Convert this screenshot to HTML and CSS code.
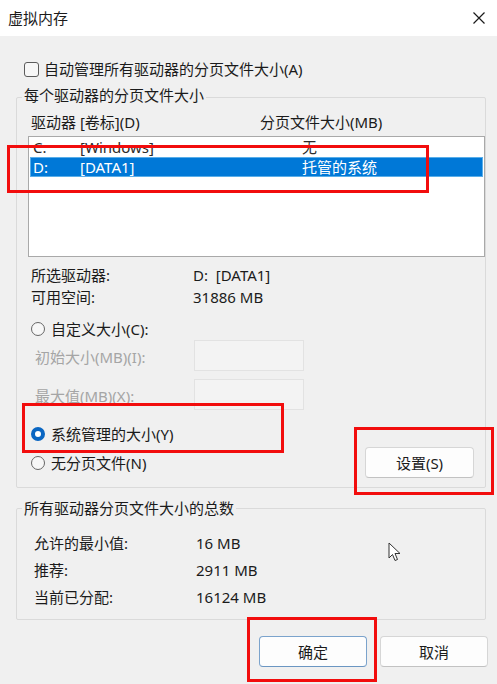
FILE: index.html
```html
<!DOCTYPE html>
<html lang="zh-CN">
<head>
<meta charset="utf-8">
<title>虚拟内存</title>
<link rel="stylesheet" href="styles.css">
</head>
<body>
<div class="window">
  <div class="titlebar">
    <span class="title">虚拟内存</span>
    <svg class="close" width="14" height="14" viewBox="0 0 14 14"><path d="M1.5 1.5 L12.5 12.5 M12.5 1.5 L1.5 12.5" stroke="#1b1b1b" stroke-width="1.2" fill="none"/></svg>
  </div>
  <div class="content">
    <div class="check-row"><span class="checkbox"></span><span>自动管理所有驱动器的分页文件大小(A)</span></div>

    <div class="group group-drives">
      <div class="group-title">每个驱动器的分页文件大小</div>
      <div class="col-head"><span class="h1">驱动器 [卷标](D)</span><span>分页文件大小(MB)</span></div>
      <div class="listbox">
        <div class="lrow"><span class="l1">C:</span><span class="l2">[Windows]</span><span>无</span></div>
        <div class="lrow sel"><span class="l1">D:</span><span class="l2">[DATA1]</span><span>托管的系统</span></div>
      </div>
      <div class="info">
        <div class="irow"><span class="ik">所选驱动器:</span><span>D:&nbsp; [DATA1]</span></div>
        <div class="irow"><span class="ik">可用空间:</span><span>31886 MB</span></div>
      </div>
      <div class="radio-row r-custom"><span class="radio"></span><span>自定义大小(C):</span></div>
      <div class="field-row f-first"><span class="fl">初始大小(MB)(I):</span><span class="input"></span></div>
      <div class="field-row f-second"><span class="fl">最大值(MB)(X):</span><span class="input"></span></div>
      <div class="radio-row r-system"><span class="radio on"></span><span>系统管理的大小(Y)</span></div>
      <div class="last-row">
        <div class="radio-row"><span class="radio"></span><span>无分页文件(N)</span></div>
        <button class="btn btn-set">设置(S)</button>
      </div>
    </div>

    <div class="group group-total">
      <div class="group-title">所有驱动器分页文件大小的总数</div>
      <div class="trows">
        <div class="trow"><span class="tk">允许的最小值:</span><span>16 MB</span></div>
        <div class="trow"><span class="tk">推荐:</span><span>2911 MB</span></div>
        <div class="trow"><span class="tk">当前已分配:</span><span>16124 MB</span></div>
      </div>
    </div>

    <div class="actions">
      <button class="btn btn-default">确定</button>
      <button class="btn">取消</button>
    </div>
  </div>

  <div class="mark mark-list"></div>
  <div class="mark mark-radio"></div>
  <div class="mark mark-set"></div>
  <div class="mark mark-ok"></div>

  <svg class="cursor" width="14" height="21" viewBox="0 0 14 21"><path d="M1 1 L1 16 L4.5 12.5 L7 18.5 L9.5 17.5 L7 11.5 L12 11.5 Z" fill="#ffffff" stroke="#333" stroke-width="1" stroke-linejoin="round"/></svg>
</div>
</body>
</html>
```

FILE: styles.css
```css
* { box-sizing: border-box; }
html, body { margin: 0; padding: 0; }
body {
  background: #f0f0f0;
  font-family: "Noto Sans", "Noto Sans CJK SC", sans-serif;
  font-size: 15px;
  color: #1b1b1b;
}
.window {
  position: relative;
  width: 497px;
  height: 684px;
  background: #f0f0f0;
  overflow: hidden;
}
.titlebar {
  height: 36px;
  background: #ffffff;
  display: flex;
  align-items: center;
  justify-content: space-between;
  padding: 0 11px 0 8px;
}
.title { font-size: 15px; line-height: 20px; }
.close { display: block; }

.content { padding: 0 11px 0 16px; }

.check-row {
  margin-top: 23px;
  height: 20px;
  display: flex;
  align-items: center;
  padding-left: 8px;
  line-height: 20px;
}
.checkbox {
  width: 15px;
  height: 15px;
  border: 1px solid #5c5c5c;
  border-radius: 3px;
  background: #f7f7f7;
  margin-right: 5px;
  flex: none;
}

.group {
  border: 1px solid #dadada;
  border-radius: 2px;
}
.group-title {
  display: table;
  line-height: 20px;
  padding: 0 2px;
  margin-left: 5px;
  background: #f0f0f0;
}
.group-drives { margin-top: 18px; padding-bottom: 9px; }
.group-drives .group-title { margin-top: -13px; }

.col-head {
  margin-top: 7px;
  line-height: 20px;
  padding-left: 14px;
  display: flex;
}
.h1 { width: 229px; }

.listbox {
  margin: 4px 0 0 11px;
  height: 121px;
  border: 1px solid #a9a9a9;
  background: #ffffff;
  padding: 0 1px;
}
.lrow {
  height: 20px;
  line-height: 20px;
  display: flex;
  padding-left: 3px;
  color: #2b2b2b;
}
.lrow.sel {
  background: #0078d7;
  color: #ffffff;
  box-shadow: inset 0 0 0 1px #59aee9;
}
.l1 { width: 47px; }
.l2 { width: 222px; }

.info { margin-top: 7px; padding-left: 14px; }
.irow { line-height: 22px; display: flex; }
.ik { width: 162px; }

.radio-row {
  display: flex;
  align-items: center;
  line-height: 20px;
  height: 20px;
}
.r-custom, .r-system { padding-left: 14px; }
.r-custom { margin-top: 11px; }
.r-system { margin-top: 14px; }
.radio {
  width: 14px;
  height: 14px;
  border-radius: 50%;
  border: 1px solid #666666;
  background: #f7f7f7;
  margin-right: 6px;
  flex: none;
}
.radio.on {
  border: 4px solid #0a66c2;
  background: #ffffff;
}

.field-row {
  display: flex;
  align-items: center;
  height: 31px;
  padding-left: 18px;
  color: #a5a5a5;
}
.f-first { margin-top: 1px; }
.f-second { margin-top: 8px; }
.fl { width: 159px; line-height: 20px; padding-top: 2px; }
.input {
  width: 110px;
  height: 31px;
  border: 1px solid #e2e2e2;
  background: #f3f3f3;
}

.last-row {
  margin-top: 3px;
  display: flex;
  align-items: center;
  justify-content: space-between;
  padding-left: 14px;
  padding-right: 11px;
}

.btn {
  font-family: "Noto Sans", "Noto Sans CJK SC", sans-serif;
  font-size: 15px;
  color: #1b1b1b;
  width: 109px;
  height: 31px;
  background: #fdfdfd;
  border: 1px solid #d6d6d6;
  border-bottom-color: #c2c2c2;
  border-radius: 4px;
  padding: 0;
  line-height: 20px;
}
.btn-default { border-color: #7ba3cc; border-bottom-color: #6b96c2; }

.group-total { margin-top: 20px; padding-bottom: 8px; }
.group-total .group-title { margin-top: -11px; }
.trows { margin-top: 12px; padding-left: 17px; }
.trow { height: 27px; line-height: 27px; display: flex; }
.tk { width: 162px; }

.actions {
  margin-top: 16px;
  margin-right: -2px;
  display: flex;
  justify-content: flex-end;
  gap: 13px;
}
.actions .btn { width: 108px; }

.mark {
  position: absolute;
  border: 3px solid #f20d0d;
}
.mark-list { left: 7px; top: 145px; width: 422px; height: 48px; }
.mark-radio { left: 22px; top: 403px; width: 262px; height: 50px; }
.mark-set { left: 354px; top: 427px; width: 140px; height: 68px; }
.mark-ok { left: 247px; top: 617px; width: 130px; height: 65px; }

.cursor { position: absolute; left: 388px; top: 542px; }
```
